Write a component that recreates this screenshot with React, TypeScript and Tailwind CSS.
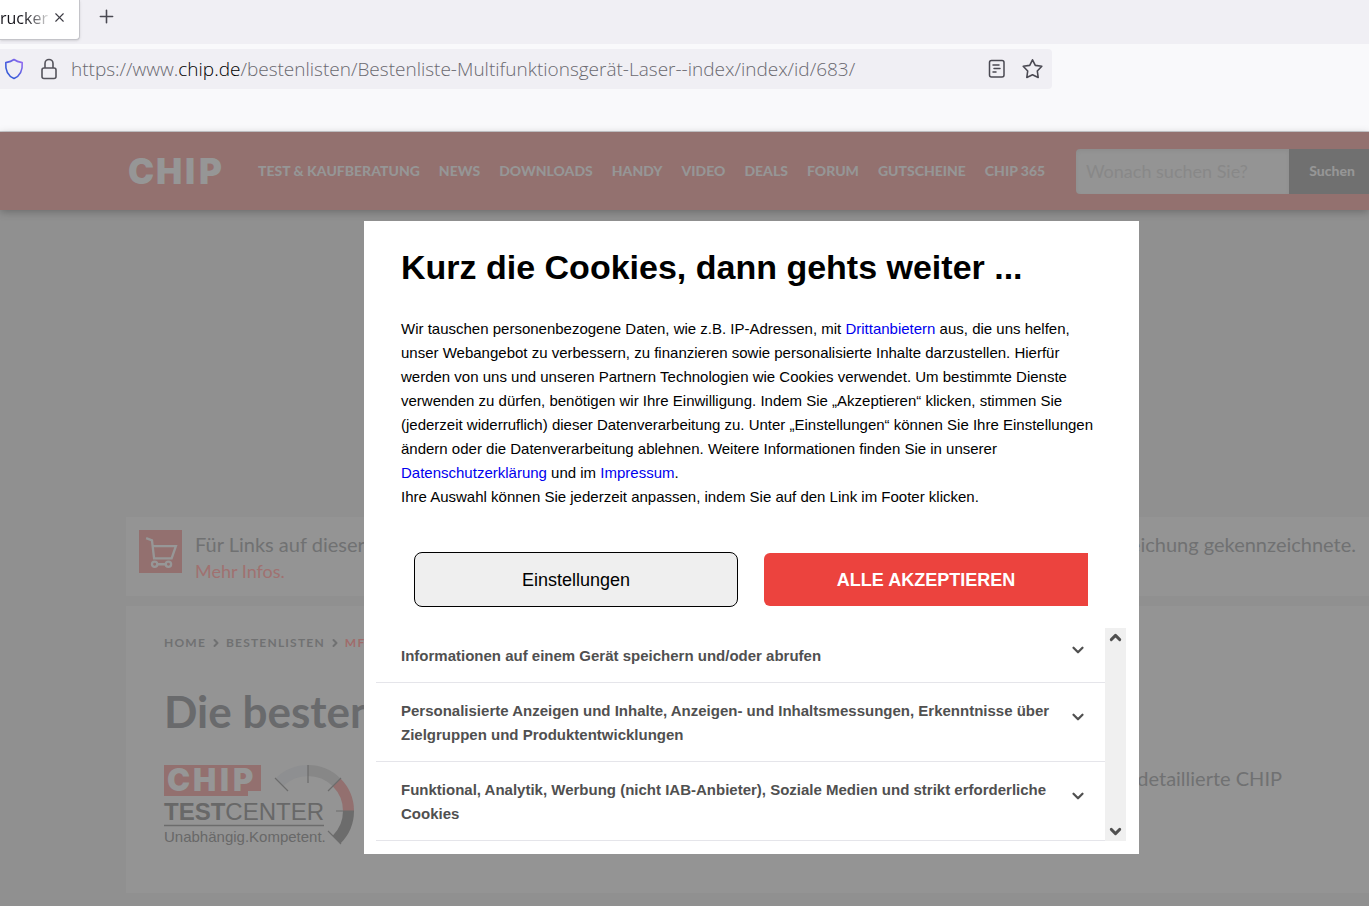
import { ChevronDown, ChevronUp, ChevronRight, Plus, X } from "lucide-react";

const navItems = [
  "TEST & KAUFBERATUNG",
  "NEWS",
  "DOWNLOADS",
  "HANDY",
  "VIDEO",
  "DEALS",
  "FORUM",
  "GUTSCHEINE",
  "CHIP 365",
];

const purposes = [
  "Informationen auf einem Gerät speichern und/oder abrufen",
  "Personalisierte Anzeigen und Inhalte, Anzeigen- und Inhaltsmessungen, Erkenntnisse über Zielgruppen und Produktentwicklungen",
  "Funktional, Analytik, Werbung (nicht IAB-Anbieter), Soziale Medien und strikt erforderliche Cookies",
];

function BrowserBar() {
  return (
    <div className="border-b border-[#cccccf] bg-[#f9f9fb] font-['Open_Sans',sans-serif]">
      <div className="flex h-11 items-start bg-[#f0eff4]">
        <div className="flex h-10 w-20 items-center rounded-br border-r border-b border-[#c4c4c9] bg-white pb-1 shadow-sm">
          <span className="w-12 bg-linear-to-r from-[#15141a] from-50% to-[#dddddd] bg-clip-text text-base whitespace-nowrap text-transparent">
            rucker
          </span>
          <button aria-label="Tab schließen" className="ml-1 text-[#3d3c44]">
            <X size={15} strokeWidth={1.8} />
          </button>
        </div>
        <button aria-label="Neuer Tab" className="mt-[6px] ml-4 text-[#4a4952]">
          <Plus size={21} strokeWidth={1.8} />
        </button>
      </div>
      <div className="mt-[5px] mb-[42px] flex h-10 w-[1052px] max-w-full items-center rounded-r bg-[#f0eff4]">
        <svg width="20" height="22" viewBox="0 0 20 22" className="ml-1" fill="none">
          <defs>
            <linearGradient id="shield" x1="0" y1="1" x2="1" y2="0">
              <stop offset="0.3" stopColor="#3a5bd9" />
              <stop offset="1" stopColor="#9b6cf2" />
            </linearGradient>
          </defs>
          <path
            d="M10 1.5 C8 3 5 4 1.8 4.6 C1.3 11 3 17.500 10 20.500 C17 17.500 18.700 11 18.200 4.600 C15 4 12 3 10 1.500Z"
            stroke="url(#shield)"
            strokeWidth="1.6"
            strokeLinejoin="round"
          />
        </svg>
        <svg width="18" height="22" viewBox="0 0 18 22" className="ml-4" fill="none" stroke="#55545c" strokeWidth="1.6">
          <rect x="2" y="10" width="14" height="10.500" rx="2" />
          <path d="M5 10V5.500a4 4 0 0 1 8 0V10" />
        </svg>
        <p className="mt-px ml-[13px] text-[19px] font-light whitespace-nowrap text-[#6a6970]">
          https://www.<span className="text-black">chip.de</span>
          /bestenlisten/Bestenliste-Multifunktionsgerät-Laser--index/index/id/683/
        </p>
        <button aria-label="Leseansicht" className="ml-auto">
          <svg width="18" height="20" viewBox="0 0 18 20" fill="none" stroke="#4a4952" strokeWidth="1.5" strokeLinecap="round">
            <rect x="1.500" y="1.500" width="14.500" height="16.500" rx="2" />
            <path d="M5 6h6M6 9.500h6M5 13h3" />
          </svg>
        </button>
        <button aria-label="Lesezeichen" className="mr-2 ml-[15px]">
          <svg width="23" height="22" viewBox="0 0 23 22" fill="none" stroke="#4a4952" strokeWidth="1.6" strokeLinejoin="round">
            <path d="M11.500 1.800 L14.300 7.400 L20.800 8.300 L16.300 13 L17.200 19.500 L11.500 16.700 L5.800 19.500 L6.700 13 L2.200 8.300 L8.700 7.400Z" />
          </svg>
        </button>
      </div>
    </div>
  );
}

function SiteHeader() {
  return (
    <header className="flex h-[78px] items-center bg-[#93716f] pl-[129px] font-['Lato',sans-serif] text-[#969696] shadow-[0_2px_8px_rgba(0,0,0,0.25)]">
      <a href="#" aria-label="CHIP" className="w-24 shrink-0">
        <svg width="96" height="28" viewBox="0 0 96 28" fill="#969696" className="overflow-visible" fontFamily="Inter, sans-serif" fontWeight="900" fontSize="35">
          <text y="27">
            <tspan x="-1">C</tspan>
            <tspan x="27">H</tspan>
            <tspan x="56">I</tspan>
            <tspan x="70">P</tspan>
          </text>
        </svg>
      </a>
      <nav className="ml-[33px] flex shrink-0 gap-[19px] text-sm font-black whitespace-nowrap">
        {navItems.map((item) => (
          <a key={item} href="#">
            {item}
          </a>
        ))}
      </nav>
      <form className="ml-auto flex h-[45px] w-[293px] shrink-0">
        <input
          type="search"
          aria-label="Suche"
          placeholder="Wonach suchen Sie?"
          className="w-[213px] rounded-l bg-[#949494] px-[10px] text-lg inset-shadow-sm placeholder:text-[#888888]"
        />
        <button type="button" className="flex-1 bg-[#707070] pl-[6px] text-sm font-black">
          Suchen
        </button>
      </form>
    </header>
  );
}

function TestCenterLogo() {
  return (
    <svg
      width="192"
      height="82"
      viewBox="0 0 192 82"
      className="mt-[26px] overflow-visible"
      fontFamily="'Liberation Sans', Arial, sans-serif"
    >
      <path d="M0 1H97V27H84V32H0Z" fill="#93706f" />
      <text y="27" fontFamily="Inter, sans-serif" fontWeight="900" fontSize="31" fill="#969696">
        <tspan x="3">C</tspan>
        <tspan x="29">H</tspan>
        <tspan x="56">I</tspan>
        <tspan x="69">P</tspan>
      </text>
      <text x="0" y="56" fontSize="24" fill="#686868">
        <tspan fontWeight="700">TEST</tspan>
        <tspan>CENTER</tspan>
      </text>
      <path d="M0 61.500H160" stroke="#6c6c6c" strokeWidth="1.500" />
      <text x="0" y="78" fontSize="15" fill="#686868">
        Unabhängig.Kompetent.
      </text>
      <g fill="none" strokeWidth="11">
        <path d="M115.400 18.400A40.500 40.500 0 0 1 144 6.500" stroke="#8e8f91" />
        <path d="M144 6.500A40.500 40.500 0 0 1 172.600 18.400" stroke="#878787" />
        <path d="M172.600 18.400A40.500 40.500 0 0 1 184.500 47" stroke="#93706f" />
        <path d="M184.500 47A40.500 40.500 0 0 1 172.600 75.600" stroke="#6c6c6c" />
      </g>
      <path
        d="M111 14L124 27M144 1V19M177 14L164 27M190 47H172M177 80L164 67"
        stroke="#6c6c6c"
        strokeWidth="1.200"
      />
    </svg>
  );
}

function PageContent() {
  return (
    <main className="mt-[307px] ml-[126px] font-['Lato',sans-serif] text-[#707172]">
      <section className="flex h-[79px] items-start bg-[#949494] px-[13px] pt-[13px]">
        <div className="flex size-[43px] shrink-0 items-center justify-center bg-[#93706f]">
          <svg width="34" height="34" viewBox="0 0 32 32" fill="none" stroke="#979797" strokeWidth="2.200">
            <path d="M2 3L7.500 5L9.500 22H26L30 10.500H8.500M10 27.500H22" />
            <circle cx="10" cy="27.500" r="2.500" fill="#93706f" />
            <circle cx="23" cy="27.500" r="2.500" fill="#93706f" />
          </svg>
        </div>
        <div className="ml-[13px] flex-1 text-lg leading-[26px]">
          <p className="flex justify-between text-xl leading-7">
            <span>Für Links auf dieser Seite</span>
            <span>Unterstreichung gekennzeichnete.</span>
          </p>
          <a href="#" className="text-[#a07170]">
            Mehr Infos.
          </a>
        </div>
      </section>
      <section className="mt-[10px] h-[287px] bg-[#949494] px-[38px] pt-[27px]">
        <div className="flex items-center gap-1 text-xs leading-5 font-bold tracking-widest">
          <a href="#">HOME</a>
          <ChevronRight size={12} strokeWidth={4} />
          <a href="#">BESTENLISTEN</a>
          <ChevronRight size={12} strokeWidth={4} />
          <span className="text-[#a06c6b]">MFP</span>
        </div>
        <h1 className="mt-8 text-[44px] leading-[53px] font-bold text-[#696a6c]">Die besten</h1>
        <div className="flex items-start justify-between pr-[49px]">
          <TestCenterLogo />
          <p className="mt-[25px] text-xl leading-[30px]">detaillierte CHIP</p>
        </div>
      </section>
    </main>
  );
}

function ConsentDialog() {
  return (
    <div
      role="dialog"
      aria-labelledby="consent-title"
      className="absolute top-[89px] left-[364px] w-[775px] bg-white pr-[13px] pb-[13px] pl-3 font-['Liberation_Sans',Arial,sans-serif] text-black"
    >
      <div className="px-[25px] pt-6">
        <h2 id="consent-title" className="text-[34px] leading-[44px] font-bold">
          Kurz die Cookies, dann gehts weiter ...
        </h2>
        <p className="mt-7 text-[15px] leading-6 whitespace-nowrap">
          Wir tauschen personenbezogene Daten, wie z.B. IP-Adressen, mit{" "}
          <a href="#" className="text-[#0000ee]">Drittanbietern</a> aus, die uns helfen,
          <br />
          unser Webangebot zu verbessern, zu finanzieren sowie personalisierte Inhalte darzustellen. Hierfür
          <br />
          werden von uns und unseren Partnern Technologien wie Cookies verwendet. Um bestimmte Dienste
          <br />
          verwenden zu dürfen, benötigen wir Ihre Einwilligung. Indem Sie „Akzeptieren“ klicken, stimmen Sie
          <br />
          (jederzeit widerruflich) dieser Datenverarbeitung zu. Unter „Einstellungen“ können Sie Ihre Einstellungen
          <br />
          ändern oder die Datenverarbeitung ablehnen. Weitere Informationen finden Sie in unserer
          <br />
          <a href="#" className="text-[#0000ee]">Datenschutzerklärung</a> und im{" "}
          <a href="#" className="text-[#0000ee]">Impressum</a>.
          <br />
          Ihre Auswahl können Sie jederzeit anpassen, indem Sie auf den Link im Footer klicken.
        </p>
      </div>
      <div className="mt-[43px] grid grid-cols-2 items-center gap-[26px] px-[38px] text-lg">
        <button className="h-[55px] rounded-lg border border-black bg-[#efefef]">Einstellungen</button>
        <button className="h-[53px] rounded-l-md bg-[#ec433e] font-bold text-white">ALLE AKZEPTIEREN</button>
      </div>
      <div className="mt-[21px] flex">
        <ul className="flex-1">
          {purposes.map((purpose) => (
            <li key={purpose} className="border-b border-[#e5e5ea]">
              <button className="flex w-full items-center justify-between pt-4 pr-[18px] pb-[14px] pl-[25px] text-left text-[15px] leading-6 font-bold text-[#505050]">
                <span className="w-[668px]">{purpose}</span>
                <ChevronDown size={18} strokeWidth={3} className="-mt-3 shrink-0" />
              </button>
            </li>
          ))}
        </ul>
        <div className="flex w-[21px] flex-col items-center justify-between bg-[#f0f0f0] py-px text-[#505050]">
          <button aria-label="Nach oben">
            <ChevronUp size={17} strokeWidth={4} />
          </button>
          <button aria-label="Nach unten">
            <ChevronDown size={17} strokeWidth={4} />
          </button>
        </div>
      </div>
    </div>
  );
}

export default function App() {
  return (
    <div className="flex min-h-screen flex-col">
      <BrowserBar />
      <div className="relative flex-1 bg-[#909090]">
        <SiteHeader />
        <PageContent />
        <ConsentDialog />
      </div>
    </div>
  );
}
